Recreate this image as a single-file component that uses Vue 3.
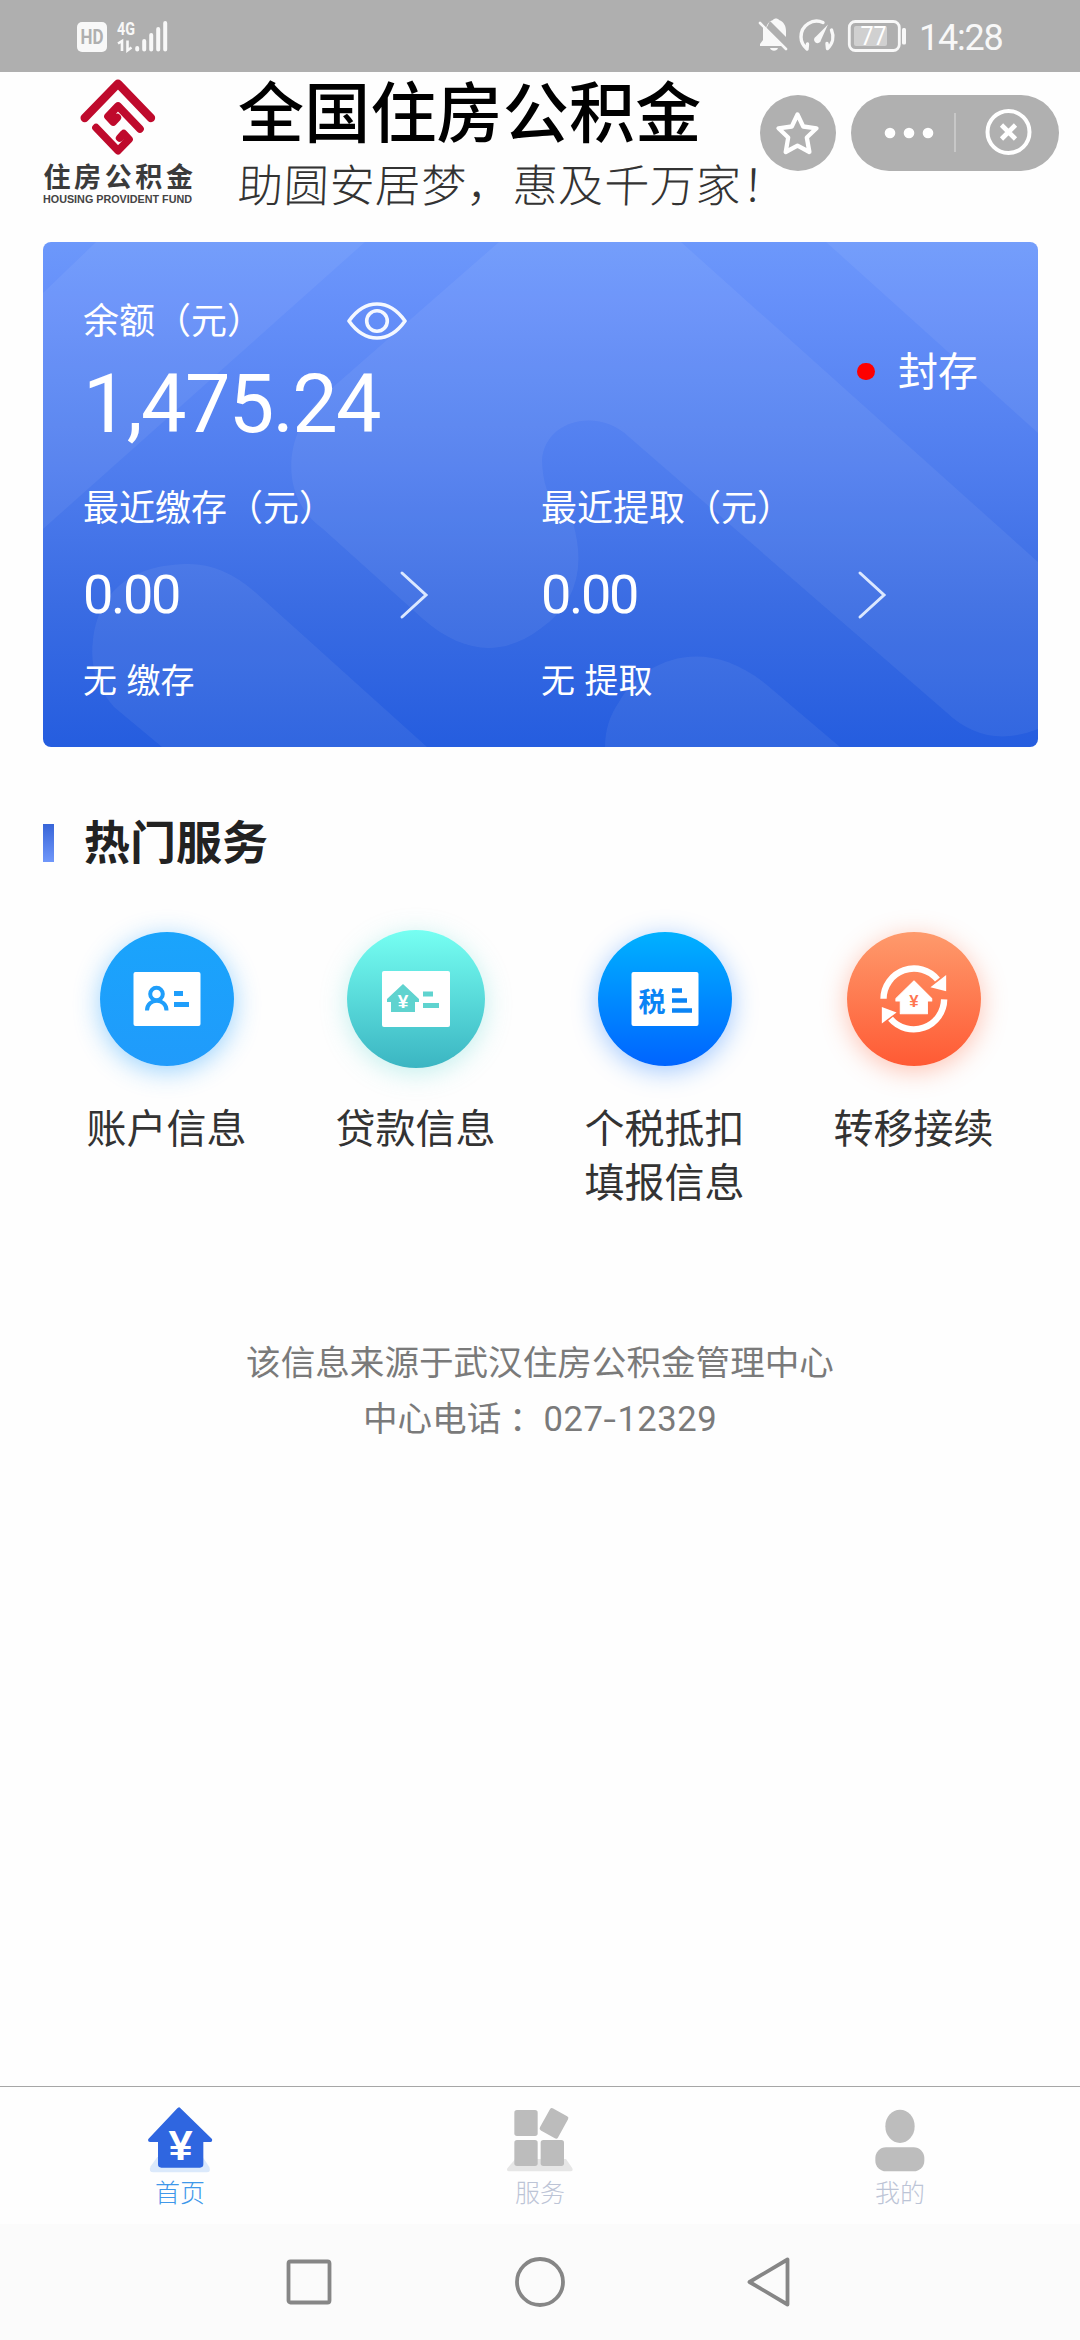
<script setup>
const records = [
  { title: '最近缴存（元）', amount: '0.00', note: '无 缴存' },
  { title: '最近提取（元）', amount: '0.00', note: '无 提取' },
]
const services = [
  { id: 'account', lines: ['账户信息'] },
  { id: 'loan', lines: ['贷款信息'] },
  { id: 'tax', lines: ['个税抵扣', '填报信息'] },
  { id: 'transfer', lines: ['转移接续'] },
]
</script>

<template>
  <div class="screen">
    <header class="status">
      <svg class="status-left" width="96" height="36" viewBox="0 0 96 36">
        <rect x="1" y="4" width="30" height="30" rx="5" fill="#f8f8f8" />
        <text x="16" y="26" class="hd" text-anchor="middle" textLength="23" lengthAdjust="spacingAndGlyphs">HD</text>
        <text x="41" y="16.5" class="net" textLength="18" lengthAdjust="spacingAndGlyphs">4G</text>
        <path d="M42 25.500l4-2.500v10M51.500 22.500v10l4-3" fill="none" stroke="#f8f8f8" stroke-width="2.600" />
        <path d="M61.200 30v1.500M68.200 23v8.500M75.200 17v14.500M82.200 11v20.500M89.200 5v26.500" stroke="#f8f8f8" stroke-width="4" stroke-linecap="round" />
      </svg>
      <div class="status-right">
        <svg width="148" height="36" viewBox="0 0 148 36">
          <g fill="#f8f8f8">
            <path d="M8 13c1-6 4-8 7-9 1-2 5-2 6 0 5 2 7 6 7 11v6L12 5z" />
            <path d="M5 11L24 30H2v-2l3-4z" />
            <path d="M12 32h8c-1 3.500-7 3.500-8 0z" />
          </g>
          <path d="M2 7l26 26" stroke="#f8f8f8" stroke-width="2.600" stroke-linecap="round" />
          <path d="M65 6.500C55 2 43 9 43 21c0 4 1.500 8 6 12l.5-5M73.500 14c3 7 1 14-4 18.500l-.5-5" fill="none" stroke="#f8f8f8" stroke-width="3.400" stroke-linecap="round" stroke-linejoin="round" />
          <path d="M70 8.500L63 24a3.500 3.500 0 1 1-5-3.500z" fill="#f8f8f8" />
          <rect x="91.300" y="5.500" width="50" height="29" rx="6" fill="none" stroke="#f8f8f8" stroke-width="2.800" />
          <rect x="96" y="10" width="33" height="20" rx="2" fill="#d0d0d0" />
          <rect x="144" y="12" width="4" height="16.500" rx="1.500" fill="#f8f8f8" />
          <text x="115.500" y="29" text-anchor="middle" class="bat" textLength="26" lengthAdjust="spacingAndGlyphs">77</text>
        </svg>
        <span class="clock">14:28</span>
      </div>
    </header>

    <section class="brand">
      <div class="logo">
        <svg width="80" height="80" viewBox="127 20 240 240">
          <g fill="none" stroke="#bf0a2c" stroke-width="23" stroke-linecap="round" stroke-linejoin="round">
            <path d="M147 143L247 40L346 143" stroke-width="25" />
            <path d="M313 176L247 107L217 138L233 155L245 142" />
            <path d="M181 172L247 241L280 207L264 190L252 203" />
          </g>
        </svg>
        <div class="logo-cn">住房公积金</div>
        <svg class="logo-en" width="150" height="14" viewBox="0 0 150 14"><text x="0" y="11" textLength="149" lengthAdjust="spacingAndGlyphs">HOUSING PROVIDENT FUND</text></svg>
      </div>
      <div class="titles">
        <h1>全国住房公积金</h1>
        <p>助圆安居梦，惠及千万家！</p>
      </div>
      <div class="star">
        <svg width="76" height="76" viewBox="0 0 76 76"><path d="M37.500 19.500l5.700 12 13.300 1.800-9.700 9.200 2.600 14.500-11.900-6.300L25.700 57l2.500-14.500-9.700-9.200 13.300-1.800z" fill="none" stroke="#fff" stroke-width="4.300" stroke-linejoin="round" /></svg>
      </div>
      <div class="capsule">
        <svg width="208" height="76" viewBox="0 0 208 76">
          <g fill="#fff"><circle cx="39" cy="38" r="5.300" /><circle cx="58" cy="38" r="5.300" /><circle cx="77" cy="38" r="5.300" /></g>
          <path d="M104 18v39" stroke="#cfcfcf" stroke-width="1.500" />
          <circle cx="157.500" cy="37" r="21" fill="none" stroke="#fff" stroke-width="4" />
          <path d="M150.500 30l14 14M164.500 30l-14 14" stroke="#fff" stroke-width="4.600" />
        </svg>
      </div>
    </section>

    <section class="card">
      <svg class="card-bg" width="995" height="505" viewBox="0 0 995 505" fill="#fff" fill-opacity="0.06">
        <path d="M53 0H322L0 287V51z" />
        <path d="M456 0L281 153C240 190 235 255 280 287L380 377C420 412 460 415 497 387Q550 350 530 281Q500 262 499 218C502 178 555 165 586 195L903 470Q943 508 995 487V320L638 0z" />
        <path d="M783 0H995V191z" />
        <path d="M119 505L71 465Q45 436 50 398C57 340 100 322 146 322Q180 322 212 350L384 505z" />
        <path d="M562 505Q562 480 576 460C598 420 660 390 724 443L797 505z" />
      </svg>
      <div class="balance">
        <div>
          <div class="balance-head">
            <span class="label">余额（元）</span>
            <svg class="eye" width="60" height="38" viewBox="0 0 60 38" fill="none" stroke="#f4f8ff" stroke-width="3.600">
              <path d="M2 19Q14 2 30 2T58 19Q46 36 30 36T2 19z" stroke-linejoin="round" /><circle cx="30" cy="19" r="10.300" />
            </svg>
          </div>
          <div class="total">1,475.24</div>
        </div>
        <div class="state"><i></i><span>封存</span></div>
      </div>
      <div class="records">
        <div v-for="r in records" :key="r.title" class="record">
          <div class="label">{{ r.title }}</div>
          <div class="amount">
            <span>{{ r.amount }}</span>
            <svg width="30" height="50" viewBox="0 0 30 50"><path d="M3 3l24 22L3 47" fill="none" stroke="#dbe8ff" stroke-width="3" stroke-linecap="round" /></svg>
          </div>
          <div class="note">{{ r.note }}</div>
        </div>
      </div>
    </section>

    <h2 class="heading"><i></i><span>热门服务</span></h2>

    <section class="services">
      <div v-for="s in services" :key="s.id" class="service">
        <div class="disc-slot">
          <div class="disc" :class="s.id">
            <svg v-if="s.id === 'account'" width="68" height="56" viewBox="0 0 68 56">
              <rect x=".5" y="1" width="67" height="54" rx="2" fill="#fff" />
              <g fill="none" stroke="#1f9efb"><circle cx="23.500" cy="23" r="6.300" stroke-width="4" /><path d="M14 39.500c0-13 19.500-13 19.500 0" stroke-width="4" /><path d="M41 22.500h9M41 33.500h15" stroke-width="5" /></g>
            </svg>
            <svg v-else-if="s.id === 'loan'" width="70" height="56" viewBox="0 0 70 56">
              <rect x="1" y="0" width="68" height="56" rx="2" fill="#fff" />
              <path d="M22 13L6 28v3h4v10h24V31h4v-3z" fill="#5fd3cf" />
              <text x="22" y="37" text-anchor="middle" fill="#fff" class="yen">¥</text>
              <path d="M42 23h10M42 34.500h16" stroke="#5fd3cf" stroke-width="5" />
            </svg>
            <svg v-else-if="s.id === 'tax'" width="68" height="56" viewBox="0 0 68 56">
              <rect x=".5" y="1" width="67" height="54" rx="2" fill="#fff" />
              <text x="21" y="40.500" text-anchor="middle" class="tax-char">税</text>
              <path d="M41 19.500h10M41 29.500h15M41 39.500h20" stroke="#0b84f5" stroke-width="4.500" />
            </svg>
            <svg v-else width="134" height="134" viewBox="0 0 400 400">
              <g transform="translate(-23 -25)">
                <path d="M132 224A91 91 0 0 1 293 167M313 226A91 91 0 0 1 153 284" fill="none" stroke="#fff" stroke-width="19" />
                <path d="M319 153V202L272 190zM127 249L171 265L127 298z" fill="#fff" />
                <path d="M223 171L169 224V231H182V269H263V231H276V224z" fill="#fff" stroke="#fff" stroke-width="3" stroke-linejoin="round" />
                <text x="223" y="250" text-anchor="middle" class="yen-big">¥</text>
              </g>
            </svg>
          </div>
        </div>
        <div v-for="l in s.lines" :key="l" class="service-label">{{ l }}</div>
      </div>
    </section>

    <section class="source">
      <div>该信息来源于武汉住房公积金管理中心</div>
      <div>中心电话 ：<span class="phone">027<b>-</b>12329</span></div>
    </section>

    <nav class="tabs">
      <div class="tab active">
        <svg width="72" height="70" viewBox="0 0 216 210">
          <path d="M40 150H176L196 180Q202 196 188 196H28Q12 196 20 178z" fill="#dbe9fb" />
          <path d="M108 2L204 96Q206 104 200 105H178V172Q178 182 168 182H52Q42 182 42 172V105H18Q10 104 13 96L100 4Q106-2 108 2z" fill="#2f66e0" />
          <text x="110" y="159" text-anchor="middle" class="yen-tab">¥</text>
        </svg>
        <span>首页</span>
      </div>
      <div class="tab">
        <svg width="72" height="70" viewBox="0 0 216 210">
          <path d="M34 156H186L205 184Q208 193 200 193H15Q7 193 10 184z" fill="#e6e6e6" />
          <g fill="#bcbcbc"><rect x="31" y="9" width="70" height="78" rx="8" /><rect x="31" y="99" width="70" height="78" rx="8" /><rect x="110" y="99" width="70" height="78" rx="8" /><rect x="119" y="11" width="62" height="76" rx="7" transform="rotate(29 150 49)" /></g>
        </svg>
        <span>服务</span>
      </div>
      <div class="tab">
        <svg width="72" height="70" viewBox="0 0 216 210" fill="#bdbdbd"><ellipse cx="108" cy="58" rx="44" ry="50" /><rect x="34" y="121" width="147" height="72" rx="32" /></svg>
        <span>我的</span>
      </div>
    </nav>

    <footer class="sysnav">
      <svg width="510" height="60" viewBox="0 0 510 60" fill="none" stroke="#868686" stroke-width="3.800" stroke-linejoin="round">
        <rect x="3.500" y="9.500" width="41" height="41" rx="2" />
        <circle cx="255" cy="30" r="23" />
        <path d="M502.500 7.500v45L464.500 30z" />
      </svg>
    </footer>
  </div>
</template>

<style>
html, body { margin: 0; background: #fefefe; }
</style>

<style scoped>
.screen {
  width: 1080px; height: 2340px; overflow: hidden; background: #fefefe;
  display: flex; flex-direction: column;
  font-family: "Noto Sans CJK SC", sans-serif; color: #333;
}
svg { display: block; flex: none; }
h1, h2, p { margin: 0; }
.status {
  height: 72px; flex: none; box-sizing: border-box; padding: 16px 75px 0 76px; background: #afafaf;
  display: flex; justify-content: space-between; align-items: flex-start;
}
.status-left { margin-top: 2px; }
.hd { font: 700 20px Roboto, sans-serif; fill: #afafaf; }
.net { font: 700 19px Roboto, sans-serif; fill: #f8f8f8; }
.bat { font: 400 26px Roboto, sans-serif; fill: #fff; }
.status-right { display: flex; width: 247px; }
.clock { margin-left: 13px; font: 400 36px/44px Roboto, sans-serif; letter-spacing: -1.2px; color: #f8f8f8; }

.brand { height: 170px; flex: none; display: flex; align-items: flex-start; }
.logo { margin-left: 43px; width: 150px; display: flex; flex-direction: column; align-items: center; padding-top: 5px; }
.logo-cn { font-weight: 700; font-size: 27px; line-height: 30px; letter-spacing: 3.600px; margin: 4px -8px 0 -4px; white-space: nowrap; color: #3b3b3b; }
.logo-en { margin-top: 1px; }
.logo-en text { font: 700 10.500px "Liberation Sans", sans-serif; fill: #444; }
.titles { margin-left: 45px; width: 522px; white-space: nowrap; }
h1 { font-size: 66px; font-weight: 500; line-height: 72px; color: #000; letter-spacing: 0.200px; }
p { font-size: 45px; font-weight: 300; line-height: 60px; letter-spacing: .800px; color: #333; transform: skewX(-2deg); margin-top: 9px; }
.star, .capsule { height: 76px; border-radius: 38px; background: #b0b0b0; margin-top: 23px; }
.star { width: 76px; flex: none; }
.capsule { width: 208px; margin-left: 15px; }

.card {
  position: relative; flex: none; width: 995px; height: 505px; margin-left: 43px; border-radius: 8px; overflow: hidden;
  background: linear-gradient(#6c98fb 0%, #6791fa 10%, #4f7dee 45%, #3a6ce3 72%, #255ddf 100%); color: #fff;
}
.card-bg { position: absolute; left: 0; top: 0; }
.balance { position: relative; display: flex; justify-content: space-between; padding: 52px 60px 0 40px; height: 185px; }
.balance-head { display: flex; width: 324px; align-items: center; justify-content: space-between; height: 48px; }
.eye { margin-top: 5px; }
.label { font-size: 36px; line-height: 48px; white-space: nowrap; }
.total { font: 400 81px/96px Roboto, sans-serif; letter-spacing: -1.700px; margin-top: 15px; }
.state { display: flex; align-items: center; height: 52px; font-size: 40px; line-height: 52px; margin-top: 49px; }
.state i { width: 18px; height: 17px; border-radius: 9px; background: #fe0000; margin: 5px 23px 0 0; }
.records { position: relative; display: flex; padding-left: 40px; }
.record { width: 458px; }
.record .label { margin-top: 2px; }
.amount { display: flex; width: 346px; justify-content: space-between; align-items: center; height: 60px; margin-top: 36px; }
.amount span { font: 400 54px/60px Roboto, sans-serif; letter-spacing: -2.300px; }
.note { font-size: 34px; line-height: 48px; margin-top: 30px; word-spacing: 2px; }

.heading { flex: none; display: flex; align-items: flex-start; margin: 60px 0 0 43px; height: 68px; font-size: 46px; line-height: 64px; font-weight: 700; color: #222; }
.heading i { width: 11px; height: 38px; margin: 17px 30px 0 0; background: linear-gradient(#3865d8, #7097fa); }
.services { flex: none; display: flex; margin: 54px 0 0 42px; height: 280px; width: 997px; }
.service { width: 249px; display: flex; flex-direction: column; align-items: center; }
.disc-slot { height: 139px; display: flex; align-items: center; margin-bottom: 31px; }
.disc { width: 134px; height: 134px; border-radius: 50%; display: flex; align-items: center; justify-content: center; }
.account { background: linear-gradient(#1aa4fc, #209bfb); box-shadow: 0 5px 26px rgba(30, 158, 252, .45); }
.loan { width: 138px; height: 138px; background: linear-gradient(#76fff2, #3bb5c2); box-shadow: 0 5px 26px rgba(80, 210, 205, .34); }
.tax { background: linear-gradient(#00b1ff, #0064ff); box-shadow: 0 5px 26px rgba(20, 120, 255, .4); }
.transfer { background: linear-gradient(#fe9a6c, #ff5a34); box-shadow: 0 5px 26px rgba(255, 105, 65, .4); }
.yen { font: 700 19px "Liberation Sans", sans-serif; }
.yen-big { font: 700 50px "Liberation Sans", sans-serif; fill: #ff7650; }
.tax-char { font: 700 27px "Noto Sans CJK SC", sans-serif; fill: #0b84f5; }
.service-label { font-size: 40px; line-height: 54px; color: #333; }

.source { flex: none; margin-top: 123px; text-align: center; font-size: 34.600px; line-height: 56px; color: #7a7a7a; }
.phone { font-family: Roboto, sans-serif; letter-spacing: .5px; line-height: 1; }
.phone b { font-weight: 400; display: inline-block; transform: scaleX(1.300); margin: 0 2px; }

.tabs { flex: none; margin-top: auto; height: 138px; box-sizing: border-box; border-top: 1px solid #a6a6a6; display: flex; background: #fefefe; }
.tab { width: 360px; display: flex; flex-direction: column; align-items: center; padding-top: 20px; font-size: 25px; line-height: 30px; font-weight: 300; color: #bcc4d6; }
.tab span { margin-top: -1px; }
.active { color: #3f98ea; }
.yen-tab { font: 700 130px "Liberation Sans", sans-serif; fill: #fff; }
.sysnav { flex: none; height: 116px; background: #fbfbfb; display: flex; justify-content: center; align-items: center; }
</style>
